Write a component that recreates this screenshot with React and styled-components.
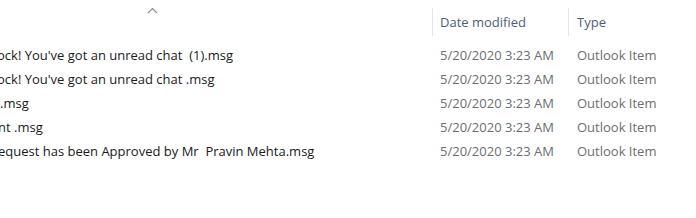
import React from "react";
import styled, { createGlobalStyle } from "styled-components";

const Global = createGlobalStyle`
  html, body { margin: 0; padding: 0; background: #ffffff; }
  body { font-family: "Open Sans", "Noto Sans", sans-serif; }
`;

const View = styled.div`
  width: 696px;
  height: 218px;
  overflow: hidden;
  background: #ffffff;
  font-size: 13px;
`;

const HeaderRow = styled.div`
  display: grid;
  grid-template-columns: 432px 136px 1fr;
  height: 43px;
`;

const NameHeader = styled.div`
  display: flex;
  justify-content: flex-start;
  padding-left: 147px;
  padding-top: 7px;
`;

const HeaderCell = styled.div`
  display: flex;
  align-items: center;
  box-sizing: border-box;
  margin-top: 8px;
  height: 28px;
  padding-left: ${(p) => p.$pad}px;
  border-left: 1px solid #e5e5e5;
  color: #4c607a;
`;

const Row = styled.div`
  display: grid;
  grid-template-columns: 432px 136px 1fr;
  height: 24px;
  align-items: center;
`;

const NameCell = styled.div`
  overflow: hidden;
  white-space: pre;
  color: #1a1a1a;
`;

const NameText = styled.span`
  display: inline-block;
  margin-left: ${(p) => p.$shift}px;
`;

const InfoCell = styled.div`
  white-space: pre;
  color: #6d6d6d;
  padding-left: ${(p) => p.$pad}px;
`;

const rows = [
  { name: "ock! You've got an unread chat  (1).msg", shift: -3 },
  { name: "ock! You've got an unread chat .msg", shift: -3 },
  { name: ".msg", shift: 0 },
  { name: "nt .msg", shift: -2 },
  { name: "equest has been Approved by Mr  Pravin Mehta.msg", shift: -2 },
];

export default function App() {
  return (
    <>
      <Global />
      <View>
        <HeaderRow>
          <NameHeader>
            <svg width="11" height="7" viewBox="0 0 11 7">
              <path d="M1 6 L5.5 1.5 L10 6" fill="none" stroke="#8a8a8a" strokeWidth="1.1" />
            </svg>
          </NameHeader>
          <HeaderCell $pad={7}>Date modified</HeaderCell>
          <HeaderCell $pad={8}>Type</HeaderCell>
        </HeaderRow>
        {rows.map((r, i) => (
          <Row key={i}>
            <NameCell>
              <NameText $shift={r.shift}>{r.name}</NameText>
            </NameCell>
            <InfoCell $pad={8}>5/20/2020 3:23 AM</InfoCell>
            <InfoCell $pad={9}>Outlook Item</InfoCell>
          </Row>
        ))}
      </View>
    </>
  );
}
